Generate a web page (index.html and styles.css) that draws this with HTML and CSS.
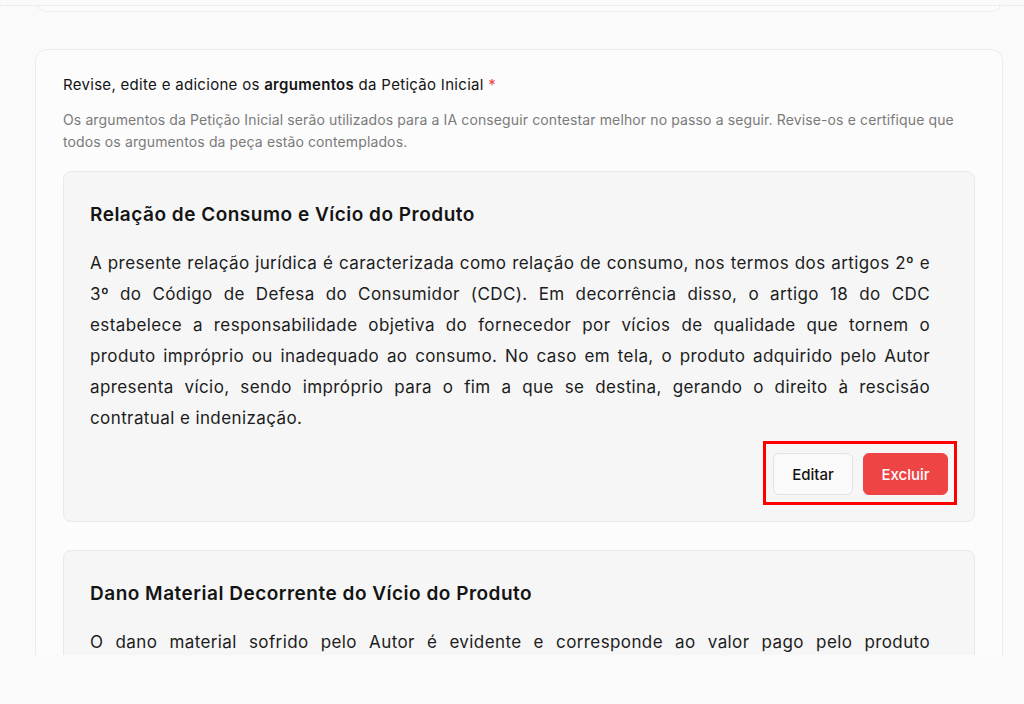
FILE: index.html
```html
<!DOCTYPE html>
<html lang="pt-BR">
<head>
<meta charset="utf-8">
<title>Argumentos da Petição Inicial</title>
<link rel="stylesheet" href="styles.css">
</head>
<body>
<div class="topbar"></div>
<main class="viewport">
  <section class="card card-prev"></section>

  <section class="card">
    <h2 class="label">Revise, edite e adicione os <strong>argumentos</strong> da Petição Inicial <span class="req">*</span></h2>
    <p class="hint">Os argumentos da Petição Inicial serão utilizados para a IA conseguir contestar melhor no passo a seguir. Revise-os e certifique que todos os argumentos da peça estão contemplados.</p>

    <article class="arg">
      <h3 class="arg-title">Relação de Consumo e Vício do Produto</h3>
      <p class="arg-text">A presente relação jurídica é caracterizada como relação de consumo, nos termos dos artigos 2º e 3º do Código de Defesa do Consumidor (CDC). Em decorrência disso, o artigo 18 do CDC estabelece a responsabilidade objetiva do fornecedor por vícios de qualidade que tornem o produto impróprio ou inadequado ao consumo. No caso em tela, o produto adquirido pelo Autor apresenta vício, sendo impróprio para o fim a que se destina, gerando o direito à rescisão contratual e indenização.</p>
      <div class="actions">
        <div class="highlight">
          <button class="btn btn-edit">Editar</button>
          <button class="btn btn-delete">Excluir</button>
        </div>
      </div>
    </article>

    <article class="arg">
      <h3 class="arg-title">Dano Material Decorrente do Vício do Produto</h3>
      <p class="arg-text">O dano material sofrido pelo Autor é evidente e corresponde ao valor pago pelo produto defeituoso, que deverá ser integralmente restituído, devidamente corrigido e acrescido de juros legais, conforme previsto no artigo 18, §1º, inciso II, do CDC.</p>
      <div class="actions">
        <button class="btn btn-edit">Editar</button>
        <button class="btn btn-delete">Excluir</button>
      </div>
    </article>
  </section>
</main>
</body>
</html>
```
FILE: styles.css
```css
* { box-sizing: border-box; }

html, body {
  margin: 0;
  padding: 0;
  background: #fafafa;
  font-family: Inter, "Noto Sans", "Liberation Sans", sans-serif;
  color: #111;
}

.topbar {
  height: 6px;
  border-bottom: 1px dotted #e2e2e2;
}

.viewport {
  height: 649px;
  overflow: hidden;
  padding: 0 21px 0 35px;
}

.card {
  background: #fcfcfc;
  border: 1px solid #ececec;
  border-radius: 12px;
  padding: 24px 27px 28px;
}

.card-prev {
  height: 40px;
  margin-top: -34px;
  margin-bottom: 37px;
  padding: 0;
}

.label {
  margin: 0;
  font-size: 15px;
  line-height: 22px;
  font-weight: 400;
  letter-spacing: 0.3px;
  color: #141414;
}

.label strong { font-weight: 600; }

.req { color: #ef4444; }

.hint {
  margin: 13px 0 18px;
  font-size: 14px;
  line-height: 22px;
  letter-spacing: 0.12px;
  color: #7a7a7a;
}

.arg {
  background: #f6f6f6;
  border: 1px solid #e9e9e9;
  border-radius: 8px;
  padding: 29px 26px 26px;
  margin-bottom: 28px;
}

.arg-title {
  margin: 0;
  font-size: 19px;
  line-height: 28px;
  font-weight: 600;
  letter-spacing: 0.5px;
  color: #141414;
}

.arg-text {
  margin: 19px 18px 0 0;
  font-size: 17px;
  line-height: 31px;
  letter-spacing: 0.4px;
  color: #1c1c1c;
  text-align: justify;
}

.actions {
  display: flex;
  justify-content: flex-end;
  gap: 10px;
  margin-top: 19px;
}

.highlight {
  display: flex;
  gap: 10px;
  position: relative;
}

.highlight::after {
  content: "";
  position: absolute;
  left: -10px;
  right: -9px;
  top: -12px;
  bottom: -10px;
  border: 3px solid #ff0000;
  pointer-events: none;
}

.btn {
  height: 42px;
  border-radius: 6px;
  font-family: inherit;
  font-size: 15px;
  font-weight: 500;
  padding: 0;
  cursor: pointer;
}

.btn-edit {
  width: 80px;
  background: #fafafa;
  border: 1px solid #e4e4e4;
  color: #141414;
}

.btn-delete {
  width: 85px;
  background: #ef4444;
  border: 1px solid #ef4444;
  color: #fff;
}
```
